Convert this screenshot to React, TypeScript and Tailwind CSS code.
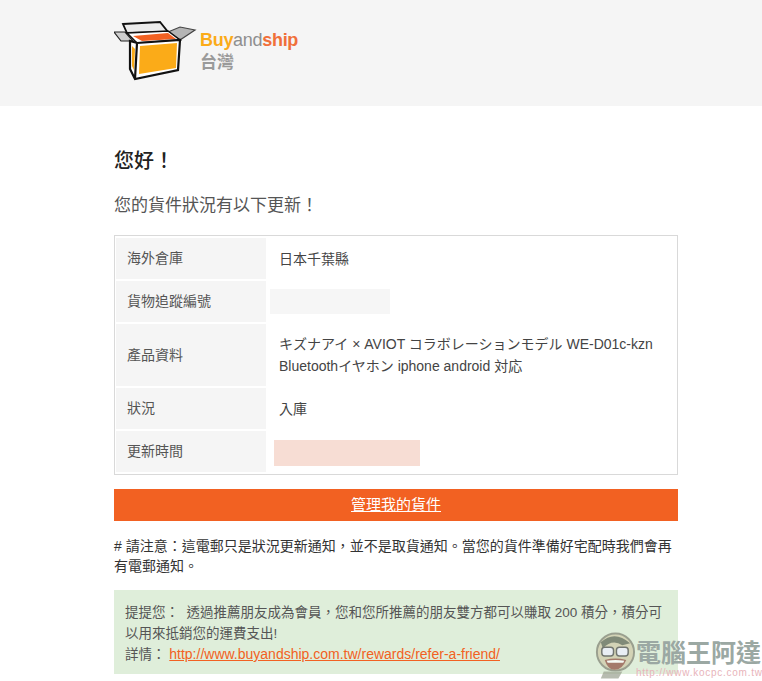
const fontStack = "font-['Liberation_Sans','Noto_Sans_CJK_TC',sans-serif]";

const rows = [
  { label: '海外倉庫', height: 'h-[41px]', value: <span>日本千葉縣</span> },
  {
    label: '貨物追蹤編號',
    height: 'h-[41px]',
    value: <div className="-ml-[9px] h-[25px] w-[120px] bg-[#f6f6f6]" />,
  },
  {
    label: '產品資料',
    height: 'h-[62px]',
    value: (
      <span>
        キズナアイ × AVIOT コラボレーションモデル WE-D01c-kzn
        <br />
        Bluetoothイヤホン iphone android 対応
      </span>
    ),
  },
  { label: '狀況', height: 'h-[41px]', value: <span>入庫</span> },
  {
    label: '更新時間',
    height: 'h-[41px]',
    value: <div className="-ml-[5px] mt-[3px] h-[26px] w-[146px] bg-[#f7ddd4]" />,
  },
];

function Logo() {
  return (
    <div className="flex items-center">
      <svg width="84" height="60" viewBox="0 0 84 60">
        {/* flaps */}
        <path d="M0 11 L11 11 L19 20 L7 20 Z" fill="#cfcfcf" stroke="#222" strokeWidth="1.2" />
        <path d="M9 3 L46 1 L54 11 L13 12 Z" fill="#ececec" stroke="#111" strokeWidth="1.8" />
        <path d="M54 11 L66 6 L81 9 L66 19 Z" fill="#b5b5b5" stroke="#444" strokeWidth="1.2" />
        {/* inside */}
        <path d="M13 12 L54 10 L66 19 L23 22 Z" fill="#fff" stroke="#111" strokeWidth="1.5" />
        <path d="M19 15 L54 12 L62 18 L28 20 Z" fill="#f26122" />
        {/* body */}
        <path d="M16 20 L23 22 L66 19 L64 49 L21 58 L16 48 Z" fill="#fff" />
        <path d="M18 25 L21 28 L20 49 L18 45 Z" fill="#fbab18" />
        <path d="M26 25 L63 22 L62 47 L25 53 Z" fill="#fbab18" />
        <path
          d="M16 20 L23 22 L66 19 L64 49 L21 58 L16 48 Z M23 22 L21 58"
          fill="none"
          stroke="#111"
          strokeWidth="2.2"
        />
      </svg>
      <div className="ml-[2px] flex flex-col">
        <div className="text-[18px] leading-[24px] font-bold tracking-[-0.3px]">
          <span className="text-[#fbab18]">Buy</span>
          <span className="font-normal text-[#8f8f8f]">and</span>
          <span className="text-[#f0703a]">ship</span>
        </div>
        <div className="text-[17px] leading-[22px] font-bold text-[#9a9a9a]">台灣</div>
      </div>
    </div>
  );
}

function Watermark() {
  return (
    <div className="absolute top-[631px] left-[593px] flex items-start">
      <svg width="43" height="48" viewBox="0 0 44 48" className="opacity-70">
        <circle cx="23" cy="21" r="19" fill="#cfc9a8" stroke="#7d7f70" strokeWidth="2" />
        <path d="M8 11 Q22 -2 38 12 L30 14 Q20 7 10 17 Z" fill="#59604f" />
        <rect x="9" y="16" width="12" height="9" rx="3" fill="#eef" stroke="#444" strokeWidth="1.5" />
        <rect x="24" y="16" width="12" height="9" rx="3" fill="#eef" stroke="#444" strokeWidth="1.5" />
        <path d="M12 29 Q23 26 34 29 Q30 39 22 39 Q15 39 12 29 Z" fill="#8c4a3d" />
        <path d="M14 30 Q23 28 32 30 L31 32 L15 32 Z" fill="#fff" />
        <path d="M11 41 L30 41 L26 48 L8 48 Z" fill="#9aa08f" />
      </svg>
      <div className="flex flex-col pt-[9px]">
        <div className="text-[25px] leading-[27px] font-bold whitespace-nowrap text-[#9ba8a3]">電腦王阿達</div>
        <div className="text-[10px] leading-[11px] tracking-[0.75px] whitespace-nowrap text-[#e8b4ba]">
          http://www.kocpc.com.tw
        </div>
      </div>
    </div>
  );
}

export default function App() {
  return (
    <div className={`relative h-[681px] w-[762px] overflow-hidden bg-white ${fontStack}`}>
      <div className="flex h-[106px] items-start bg-[#f5f5f5] pt-[21px] pl-[114px]">
        <Logo />
      </div>

      <div className="ml-[114px] w-[564px]">
        <h1 className="mt-[41px] text-[20px] leading-[28px] font-medium text-[#222]">您好！</h1>
        <p className="mt-[19px] text-[17px] leading-[24px] text-[#555]">您的貨件狀況有以下更新！</p>

        <div className="mt-[17px] flex flex-col gap-[2px] border border-[#d9d9d9] px-[1px] py-[2px]">
          {rows.map((row) => (
            <div key={row.label} className={`flex gap-[2px] ${row.height}`}>
              <div className="flex w-[150px] items-center bg-[#f5f5f5] pl-[11px] text-[14px] text-[#555]">
                {row.label}
              </div>
              <div className="flex flex-1 items-center pl-[11px] text-[14px] leading-[22px] text-[#444]">
                {row.value}
              </div>
            </div>
          ))}
        </div>

        <a className="mt-[14px] flex h-[32px] items-center justify-center bg-[#f26122] text-[15px] text-white underline">
          管理我的貨件
        </a>

        <p className="mt-[15px] text-[14px] leading-[20px] text-[#333]">
          # 請注意：這電郵只是狀況更新通知，並不是取貨通知。當您的貨件準備好宅配時我們會再有電郵通知。
        </p>

        <div className="mt-[14px] h-[84px] bg-[#dfeeda] px-[11px] pt-[12px] text-[13.5px] leading-[21px] text-[#555]">
          提提您：&nbsp; 透過推薦朋友成為會員，您和您所推薦的朋友雙方都可以賺取 200 積分，積分可以用來抵銷您的運費支出!
          <br />
          詳情： <a className="text-[14px] text-[#f26122] underline">http://www.buyandship.com.tw/rewards/refer-a-friend/</a>
        </div>
      </div>

      <Watermark />
    </div>
  );
}
